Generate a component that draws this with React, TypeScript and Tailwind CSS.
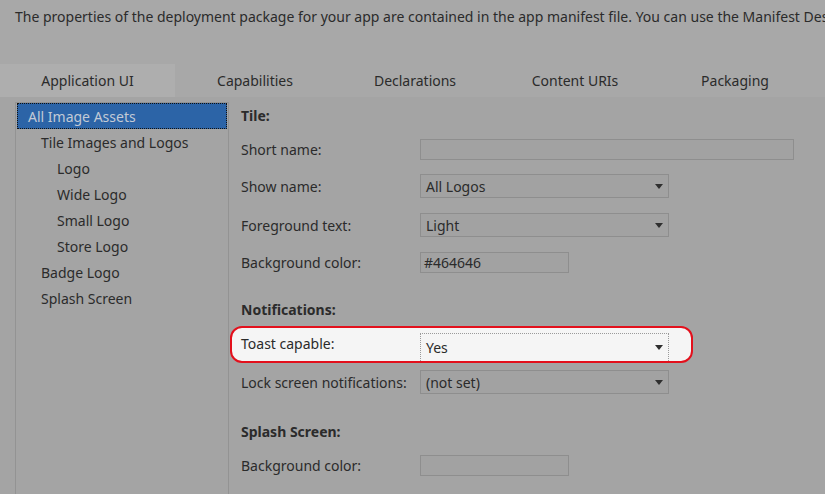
import React from "react";

const font = { fontFamily: '"Noto Sans", "Open Sans", sans-serif' };

function Arrow() {
    return (
        <svg width="8" height="5" viewBox="0 0 8 5" className="shrink-0">
            <path d="M0 0 H8 L4 5 Z" fill="#2f2f2f" />
        </svg>
    );
}

function Select({ value, width = "w-[249px]" }: { value: string; width?: string }) {
    return (
        <div className={`${width} h-[24px] flex items-center justify-between pl-[5px] pr-[5px] bg-[#a2a2a2] border border-[#8e8e8e]`}>
            <span>{value}</span>
            <Arrow />
        </div>
    );
}

function TextBox({ value = "", width }: { value?: string; width: string }) {
    return (
        <div className={`${width} h-[21px] flex items-center pl-[3px] bg-[#a2a2a2] border border-[#8e8e8e]`}>
            {value}
        </div>
    );
}

function Row({ label, children, className = "" }: { label: string; children?: React.ReactNode; className?: string }) {
    return (
        <div className={`flex items-center h-[24px] ${className}`}>
            <div className="w-[179px] shrink-0">{label}</div>
            {children}
        </div>
    );
}

const tabs = ["Application UI", "Capabilities", "Declarations", "Content URIs", "Packaging"];
const assets = [
    { name: "Tile Images and Logos", indent: "pl-[25px]" },
    { name: "Logo", indent: "pl-[41px]" },
    { name: "Wide Logo", indent: "pl-[41px]" },
    { name: "Small Logo", indent: "pl-[41px]" },
    { name: "Store Logo", indent: "pl-[41px]" },
    { name: "Badge Logo", indent: "pl-[25px]" },
    { name: "Splash Screen", indent: "pl-[25px]" },
];

export default function App() {
    return (
        <div className="w-[825px] h-[494px] overflow-hidden bg-[#a4a4a4] text-[#2b2b2b] text-[14px] flex flex-col" style={font}>
            <div className="h-[64px] bg-[#a8a8a8] pl-[15px] pt-[8px] leading-[18px] whitespace-nowrap overflow-hidden">
                The properties of the deployment package for your app are contained in the app manifest file. You can use the Manifest Designer to set or modify one or more of the properties.
            </div>

            <div className="h-[33px] flex bg-[#a8a8a8]">
                {tabs.map((t, i) => (
                    <div
                        key={t}
                        className={`flex items-center justify-center ${i === 0 ? "w-[175px] bg-[#aeaeae]" : "w-[160px]"}`}
                    >
                        {t}
                    </div>
                ))}
            </div>

            <div className="flex flex-1 pt-[5px]">
                <div className="ml-[15px] w-[214px] border-l border-r border-t border-[#939393] flex flex-col">
                    <div className="mx-[1px] h-[26px] bg-[#2c64a7] text-[#c2cad6] flex items-center pl-[10px] border border-dotted border-[#111]">
                        All Image Assets
                    </div>
                    {assets.map(a => (
                        <div key={a.name} className={`h-[26px] flex items-center ${a.indent}`}>{a.name}</div>
                    ))}
                </div>

                <div className="flex flex-col pl-[12px] pt-[1px]">
                    <Row label="Tile:" className="font-bold" />
                    <Row label="Short name:" className="mt-[10px]">
                        <TextBox width="w-[374px]" />
                    </Row>
                    <Row label="Show name:" className="mt-[13px]">
                        <Select value="All Logos" />
                    </Row>
                    <Row label="Foreground text:" className="mt-[15px]">
                        <Select value="Light" />
                    </Row>
                    <Row label="Background color:" className="mt-[13px]">
                        <TextBox value="#464646" width="w-[149px]" />
                    </Row>
                    <Row label="Notifications:" className="mt-[23px] font-bold" />

                    <div className="mt-[5px] -ml-[11px] w-[463px] h-[37px] flex items-center pl-[9px] bg-[#f5f5f5] border-2 border-[#e3101c] rounded-[12px]">
                        <div className="w-[179px] shrink-0 -mt-[3px]">Toast capable:</div>
                        <div className="w-[249px] h-[28px] mt-[5px] flex items-center justify-between pl-[5px] pr-[5px] border-t border-l border-r border-dotted border-[#9a9a9a]">
                            <span>Yes</span>
                            <Arrow />
                        </div>
                    </div>

                    <Row label="Lock screen notifications:" className="mt-[7px]">
                        <Select value="(not set)" />
                    </Row>
                    <Row label="Splash Screen:" className="mt-[25px] font-bold" />
                    <Row label="Background color:" className="mt-[10px]">
                        <TextBox width="w-[149px]" />
                    </Row>
                </div>
            </div>
        </div>
    );
}
